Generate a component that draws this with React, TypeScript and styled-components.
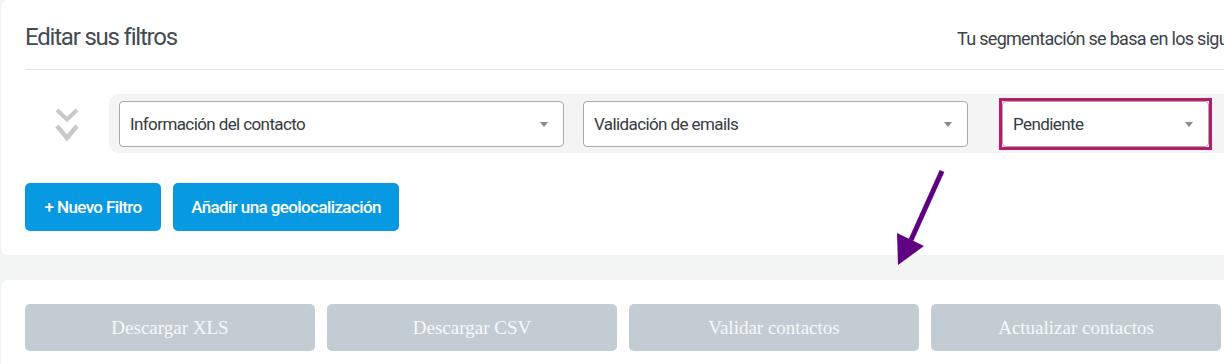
import styled, { createGlobalStyle } from "styled-components";

const GlobalStyle = createGlobalStyle`
  html, body {
    margin: 0;
    overflow: hidden;
    background: #f3f4f4;
  }
  body {
    font-family: Roboto, "Liberation Sans", sans-serif;
    color: #3b4148;
  }
`;

const Page = styled.div`
  position: relative;
  width: 1500px;
  padding-left: 1px;
`;

const Card = styled.section<{ $gap?: number }>`
  background: #fff;
  border-radius: 6px;
  padding: 0 24px 24px;
  margin-top: ${(p) => p.$gap ?? 0}px;
`;

const Header = styled.div`
  display: grid;
  grid-template-columns: 932px auto;
  align-items: baseline;
  height: 46px;
  padding-top: 23px;
  border-bottom: 1px solid #e3e3e3;
`;

const Title = styled.h2`
  margin: 0;
  font-size: 24px;
  line-height: 28px;
  font-weight: 400;
  letter-spacing: -1.2px;
  color: #434a51;
`;

const Hint = styled.p`
  margin: 0;
  font-size: 18px;
  line-height: 28px;
  letter-spacing: -0.7px;
  white-space: nowrap;
  color: #3b4148;
`;

const FilterLine = styled.div`
  display: flex;
  align-items: center;
  margin-top: 24px;
`;

const Handle = styled.div`
  width: 84px;
  display: flex;
  justify-content: center;
  padding-top: 2px;
`;

const FilterBox = styled.div`
  flex: 1;
  display: flex;
  align-items: center;
  height: 59px;
  box-sizing: border-box;
  padding: 0 10px;
  background: #f4f4f4;
  border-radius: 10px;
`;

const Select = styled.div<{ $width: number }>`
  position: relative;
  box-sizing: border-box;
  width: ${(p) => p.$width}px;
  height: 46px;
  display: flex;
  align-items: center;
  padding: 0 36px 0 10px;
  background: #fff;
  border: 1px solid #a9a9a9;
  border-radius: 4px;
  font-size: 17px;
  letter-spacing: -0.6px;
  color: #333a40;

  &::after {
    content: "";
    position: absolute;
    right: 15px;
    top: 20px;
    border-left: 4px solid transparent;
    border-right: 4px solid transparent;
    border-top: 5px solid #8a8a8a;
  }
`;

const Gap = styled.div<{ $width: number }>`
  width: ${(p) => p.$width}px;
  flex: none;
`;

const Highlight = styled.div`
  border: 3px solid #b31b6b;
  line-height: 0;
`;

const Actions = styled.div`
  display: flex;
  gap: 12px;
  margin-top: 30px;
`;

const PrimaryButton = styled.button<{ $width: number }>`
  width: ${(p) => p.$width}px;
  height: 48px;
  border: none;
  border-radius: 5px;
  background: #0899e3;
  color: #fff;
  font-family: Roboto, "Liberation Sans", sans-serif;
  font-size: 17px;
  font-weight: 500;
  letter-spacing: -0.6px;
  cursor: pointer;
`;

const ExportRow = styled.div`
  display: flex;
  gap: 12px;
  padding-top: 24px;
`;

const ExportButton = styled.button`
  width: 290px;
  height: 47px;
  border: none;
  border-radius: 5px;
  background: #c2ccd2;
  color: #f7f9fa;
  font-family: "Liberation Serif", serif;
  font-size: 19px;
  padding: 0;
`;

const Pointer = styled.svg`
  position: absolute;
  left: 890px;
  top: 165px;
`;

function DoubleChevron() {
  return (
    <svg width="24" height="35" viewBox="0 0 24 35">
      <polyline points="2,3 12,12.5 22,3" fill="none" stroke="#c9c9c9" strokeWidth="4" strokeLinejoin="miter" />
      <polyline points="2,19 12,31 22,19" fill="none" stroke="#c9c9c9" strokeWidth="4.5" strokeLinejoin="miter" />
    </svg>
  );
}

export default function App(): JSX.Element {
  return (
    <Page>
      <GlobalStyle />
      <Card>
        <Header>
          <Title>Editar sus filtros</Title>
          <Hint>Tu segmentación se basa en los siguientes filtros</Hint>
        </Header>

        <FilterLine>
          <Handle>
            <DoubleChevron />
          </Handle>
          <FilterBox>
            <Select $width={445}>Información del contacto</Select>
            <Gap $width={19} />
            <Select $width={385}>Validación de emails</Select>
            <Gap $width={31} />
            <Highlight>
              <Select $width={207}>Pendiente</Select>
            </Highlight>
          </FilterBox>
        </FilterLine>

        <Actions>
          <PrimaryButton $width={136}>+ Nuevo Filtro</PrimaryButton>
          <PrimaryButton $width={226}>Añadir una geolocalización</PrimaryButton>
        </Actions>
      </Card>

      <Card $gap={25}>
        <ExportRow>
          <ExportButton>Descargar XLS</ExportButton>
          <ExportButton>Descargar CSV</ExportButton>
          <ExportButton>Validar contactos</ExportButton>
          <ExportButton>Actualizar contactos</ExportButton>
        </ExportRow>
      </Card>

      {/* annotation arrow pointing at the export buttons */}
      <Pointer width="60" height="105" viewBox="0 0 60 105">
        <line x1="52" y1="6" x2="21" y2="75" stroke="#5f0080" strokeWidth="5" />
        <polygon points="8,100 7,68 34,81" fill="#5f0080" />
      </Pointer>
    </Page>
  );
}
